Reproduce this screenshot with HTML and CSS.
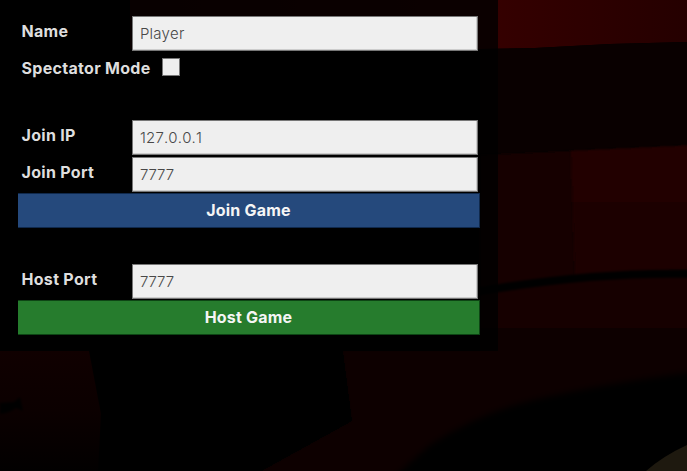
FILE: index.html
```html
<!DOCTYPE html>
<html lang="en">
<head>
<meta charset="utf-8">
<title>Multiplayer</title>
<link rel="stylesheet" href="styles.css">
</head>
<body>
<svg class="scene" viewBox="0 0 687 471" aria-hidden="true">
  <defs>
    <linearGradient id="top" x1="0" x2="1"><stop offset="0" stop-color="#260000"/><stop offset=".65" stop-color="#350000"/><stop offset="1" stop-color="#250000"/></linearGradient>
    <linearGradient id="wall" gradientUnits="userSpaceOnUse" x1="0" y1="150" x2="0" y2="471"><stop offset="0" stop-color="#120000"/><stop offset=".35" stop-color="#190000"/><stop offset=".6" stop-color="#100000"/><stop offset="1" stop-color="#090000"/></linearGradient>
    <linearGradient id="block" x1="0" y1="0" x2="0" y2="1"><stop offset="0" stop-color="#240000"/><stop offset="1" stop-color="#1a0000"/></linearGradient>
    <linearGradient id="left" x1="0" y1="0" x2="0" y2="1"><stop offset="0" stop-color="#100000"/><stop offset=".5" stop-color="#0b0000"/><stop offset="1" stop-color="#020000"/></linearGradient>
    <filter id="soft" x="-10%" y="-10%" width="120%" height="120%"><feGaussianBlur stdDeviation="3"/></filter>
    <filter id="edge" x="-10%" y="-30%" width="120%" height="160%"><feGaussianBlur stdDeviation="1"/></filter>
  </defs>
  <rect width="687" height="471" fill="#000"/>
  <path d="M130 0H687V42L610 44L535 48L480 49H130Z" fill="url(#top)"/>
  <path d="M480 49L535 48L610 44L687 42V155H480Z" fill="#090000"/>
  <path d="M480 155L570 151L700 145V480H245L352 421L343 351H480Z" fill="url(#wall)" filter="url(#edge)"/>
  <path d="M571 151L700 145V270Q620 272 575 278Z" fill="url(#block)" filter="url(#edge)"/>
  <path d="M470 293Q590 271 700 274" fill="none" stroke="#000" stroke-width="8" filter="url(#edge)"/>
  <path d="M700 371Q575 388 515 405Q470 419 430 445L385 485H700Z" fill="#000" filter="url(#soft)"/>
  <path d="M0 351H89L101 414L98 471H0Z" fill="url(#left)"/>
  <path d="M0 403L14 402L20 397L23 411L16 408Q10 413 0 414Z" fill="#000" filter="url(#edge)"/>
  <path d="M646 471Q663 456 687 445V471Z" fill="#1e190f"/>
</svg>
<form class="panel">
  <div class="row">
    <label class="label" for="name">Name</label>
    <input class="field" id="name" type="text" value="Player">
  </div>
  <div class="row row-check">
    <label class="label-wide" for="spectator">Spectator Mode</label>
    <input class="check" id="spectator" type="checkbox">
  </div>
  <div class="row row-group">
    <label class="label" for="ip">Join IP</label>
    <input class="field" id="ip" type="text" value="127.0.0.1">
  </div>
  <div class="row row-next">
    <label class="label" for="join-port">Join Port</label>
    <input class="field" id="join-port" type="text" value="7777">
  </div>
  <button class="button join" type="button">Join Game</button>
  <div class="row row-host">
    <label class="label" for="host-port">Host Port</label>
    <input class="field" id="host-port" type="text" value="7777">
  </div>
  <button class="button host" type="button">Host Game</button>
</form>
</body>
</html>
```
FILE: styles.css
```css
* {
  box-sizing: border-box;
}

body {
  margin: 0;
  height: 471px;
  overflow: hidden;
  background: #000;
  color: #dedede;
  font-family: Inter, "Liberation Sans", sans-serif;
}

.scene {
  position: absolute;
  inset: 0;
  z-index: -1;
  width: 687px;
  height: 471px;
}

.panel {
  width: 498px;
  height: 351px;
  padding: 16px 18px 0;
  background: rgba(0, 0, 0, 0.78);
}

.row {
  display: flex;
  height: 35px;
  padding-left: 3.5px;
}

.label,
.label-wide {
  font-size: 16px;
  font-weight: 700;
  line-height: 30px;
  letter-spacing: 0.3px;
}

.label {
  width: 110.5px;
}

.label-wide {
  width: 140px;
}

.field {
  width: 346px;
  height: 35px;
  margin: 0;
  padding: 0 7px;
  border: 1px solid #777;
  border-radius: 0;
  outline: 0;
  background: #efefef;
  box-shadow: inset -1px -1px #cdcdcd;
  color: #484848;
  font: 300 15px Inter, sans-serif;
  font-kerning: none;
  letter-spacing: 0.15px;
}

.row-check {
  height: 30px;
  margin-top: 2px;
}

.check {
  appearance: none;
  width: 18px;
  height: 18px;
  margin: 5px 0 0;
  border: 1px solid #777;
  background: #efefef;
}

.row-group {
  margin-top: 37px;
}

.row-next {
  margin-top: 2px;
}

.row-host {
  margin-top: 36px;
}

.button {
  display: block;
  width: 462px;
  height: 35px;
  margin: 1px 0 0;
  padding: 0 0 2px;
  border: 1px solid;
  border-left: 0;
  color: #f5f5f5;
  font: 700 16px Inter, sans-serif;
  letter-spacing: 0.2px;
}

.join {
  border-color: #10294c;
  background: #25497c;
}

.host {
  border-color: #0d4514;
  background: #267c2d;
}
```
